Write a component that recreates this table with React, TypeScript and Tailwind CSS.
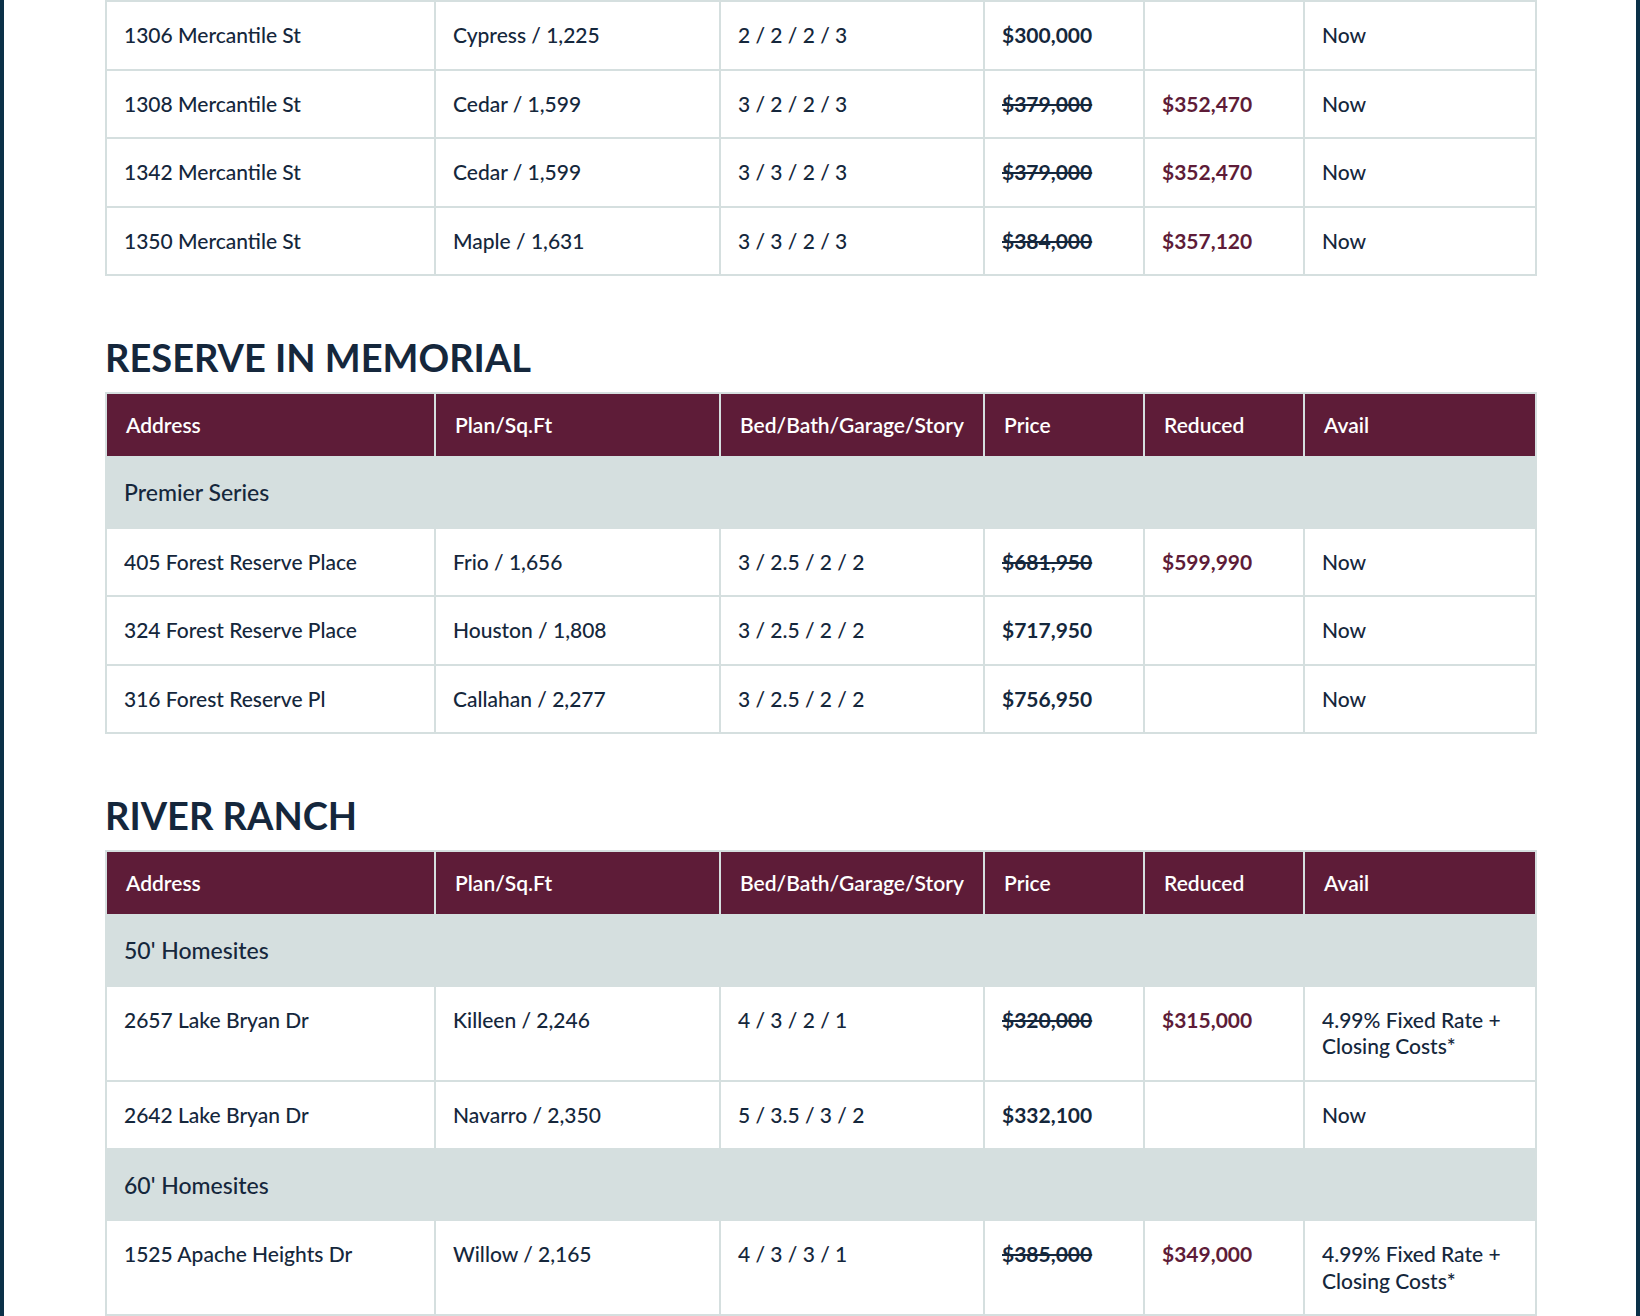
import React from 'react';

type Row = {
  address: string;
  plan: string;
  rooms: string;
  price: string;
  reduced?: string;
  avail: string;
};

type Group = { title?: string; rows: Row[] };

const now = 'Now';
const rate = '4.99% Fixed Rate + Closing Costs*';

const mercantile: Group[] = [
  {
    rows: [
      { address: '1306 Mercantile St', plan: 'Cypress / 1,225', rooms: '2 / 2 / 2 / 3', price: '$300,000', avail: now },
      { address: '1308 Mercantile St', plan: 'Cedar / 1,599', rooms: '3 / 2 / 2 / 3', price: '$379,000', reduced: '$352,470', avail: now },
      { address: '1342 Mercantile St', plan: 'Cedar / 1,599', rooms: '3 / 3 / 2 / 3', price: '$379,000', reduced: '$352,470', avail: now },
      { address: '1350 Mercantile St', plan: 'Maple / 1,631', rooms: '3 / 3 / 2 / 3', price: '$384,000', reduced: '$357,120', avail: now },
    ],
  },
];

const reserve: Group[] = [
  {
    title: 'Premier Series',
    rows: [
      { address: '405 Forest Reserve Place', plan: 'Frio / 1,656', rooms: '3 / 2.5 / 2 / 2', price: '$681,950', reduced: '$599,990', avail: now },
      { address: '324 Forest Reserve Place', plan: 'Houston / 1,808', rooms: '3 / 2.5 / 2 / 2', price: '$717,950', avail: now },
      { address: '316 Forest Reserve Pl', plan: 'Callahan / 2,277', rooms: '3 / 2.5 / 2 / 2', price: '$756,950', avail: now },
    ],
  },
];

const riverRanch: Group[] = [
  {
    title: "50' Homesites",
    rows: [
      { address: '2657 Lake Bryan Dr', plan: 'Killeen / 2,246', rooms: '4 / 3 / 2 / 1', price: '$320,000', reduced: '$315,000', avail: rate },
      { address: '2642 Lake Bryan Dr', plan: 'Navarro / 2,350', rooms: '5 / 3.5 / 3 / 2', price: '$332,100', avail: now },
    ],
  },
  {
    title: "60' Homesites",
    rows: [
      { address: '1525 Apache Heights Dr', plan: 'Willow / 2,165', rooms: '4 / 3 / 3 / 1', price: '$385,000', reduced: '$349,000', avail: rate },
    ],
  },
];

const headers = ['Address', 'Plan/Sq.Ft', 'Bed/Bath/Garage/Story', 'Price', 'Reduced', 'Avail'];

const cell = 'border-2 border-[#d5dfdf] px-[17px] py-[20px] align-top';

function HomesTable({ groups, showHead = true }: { groups: Group[]; showHead?: boolean }) {
  return (
    <table className="w-full table-fixed border-collapse text-[21px] leading-[26.5px] text-[#15273c]">
      <colgroup>
        <col className="w-[329px]" />
        <col className="w-[285px]" />
        <col className="w-[264px]" />
        <col className="w-[160px]" />
        <col className="w-[160px]" />
        <col className="w-[232px]" />
      </colgroup>
      {showHead && (
        <thead>
          <tr className="bg-[#5e1c38] text-white">
            {headers.map((h) => (
              <th key={h} className="border-2 border-[#d5dfdf] px-[19px] py-[17.5px] text-left font-semibold">
                {h}
              </th>
            ))}
          </tr>
        </thead>
      )}
      <tbody>
        {groups.map((g, gi) => (
          <React.Fragment key={gi}>
            {g.title && (
              <tr className="bg-[#d5dfdf]">
                <td colSpan={6} className="border-2 border-[#d5dfdf] px-[17px] py-[20.5px] text-[23px] leading-[28px] font-medium">
                  {g.title}
                </td>
              </tr>
            )}
            {g.rows.map((r) => (
              <tr key={r.address} className="bg-white">
                <td className={cell + ' font-medium'}>{r.address}</td>
                <td className={cell + ' font-medium'}>{r.plan}</td>
                <td className={cell + ' font-medium'}>{r.rooms}</td>
                <td className={cell + ' font-bold' + (r.reduced ? ' line-through' : '')}>{r.price}</td>
                <td className={cell + ' font-bold text-[#5e1c38]'}>{r.reduced ?? ''}</td>
                <td className={cell + ' font-medium pr-[30px]'}>{r.avail}</td>
              </tr>
            ))}
          </React.Fragment>
        ))}
      </tbody>
    </table>
  );
}

function Section({ title, groups }: { title: string; groups: Group[] }) {
  return (
    <section className="mt-[55px]">
      <h2 className="mb-[9px] text-[38px] font-bold uppercase leading-[52px] text-[#15273c]">{title}</h2>
      <HomesTable groups={groups} />
    </section>
  );
}

export default function App() {
  return (
    <div className="flex min-h-[1316px] bg-white font-['Lato','Noto_Sans',sans-serif]">
      <div className="w-[4px] shrink-0 bg-[#0b3148]" />
      <main className="flex-1 overflow-hidden">
        <div className="mx-auto w-[1430px]">
          <HomesTable groups={mercantile} showHead={false} />
          <Section title="Reserve in Memorial" groups={reserve} />
          <Section title="River Ranch" groups={riverRanch} />
        </div>
      </main>
      <div className="w-[4px] shrink-0 bg-[#0b3148]" />
    </div>
  );
}
